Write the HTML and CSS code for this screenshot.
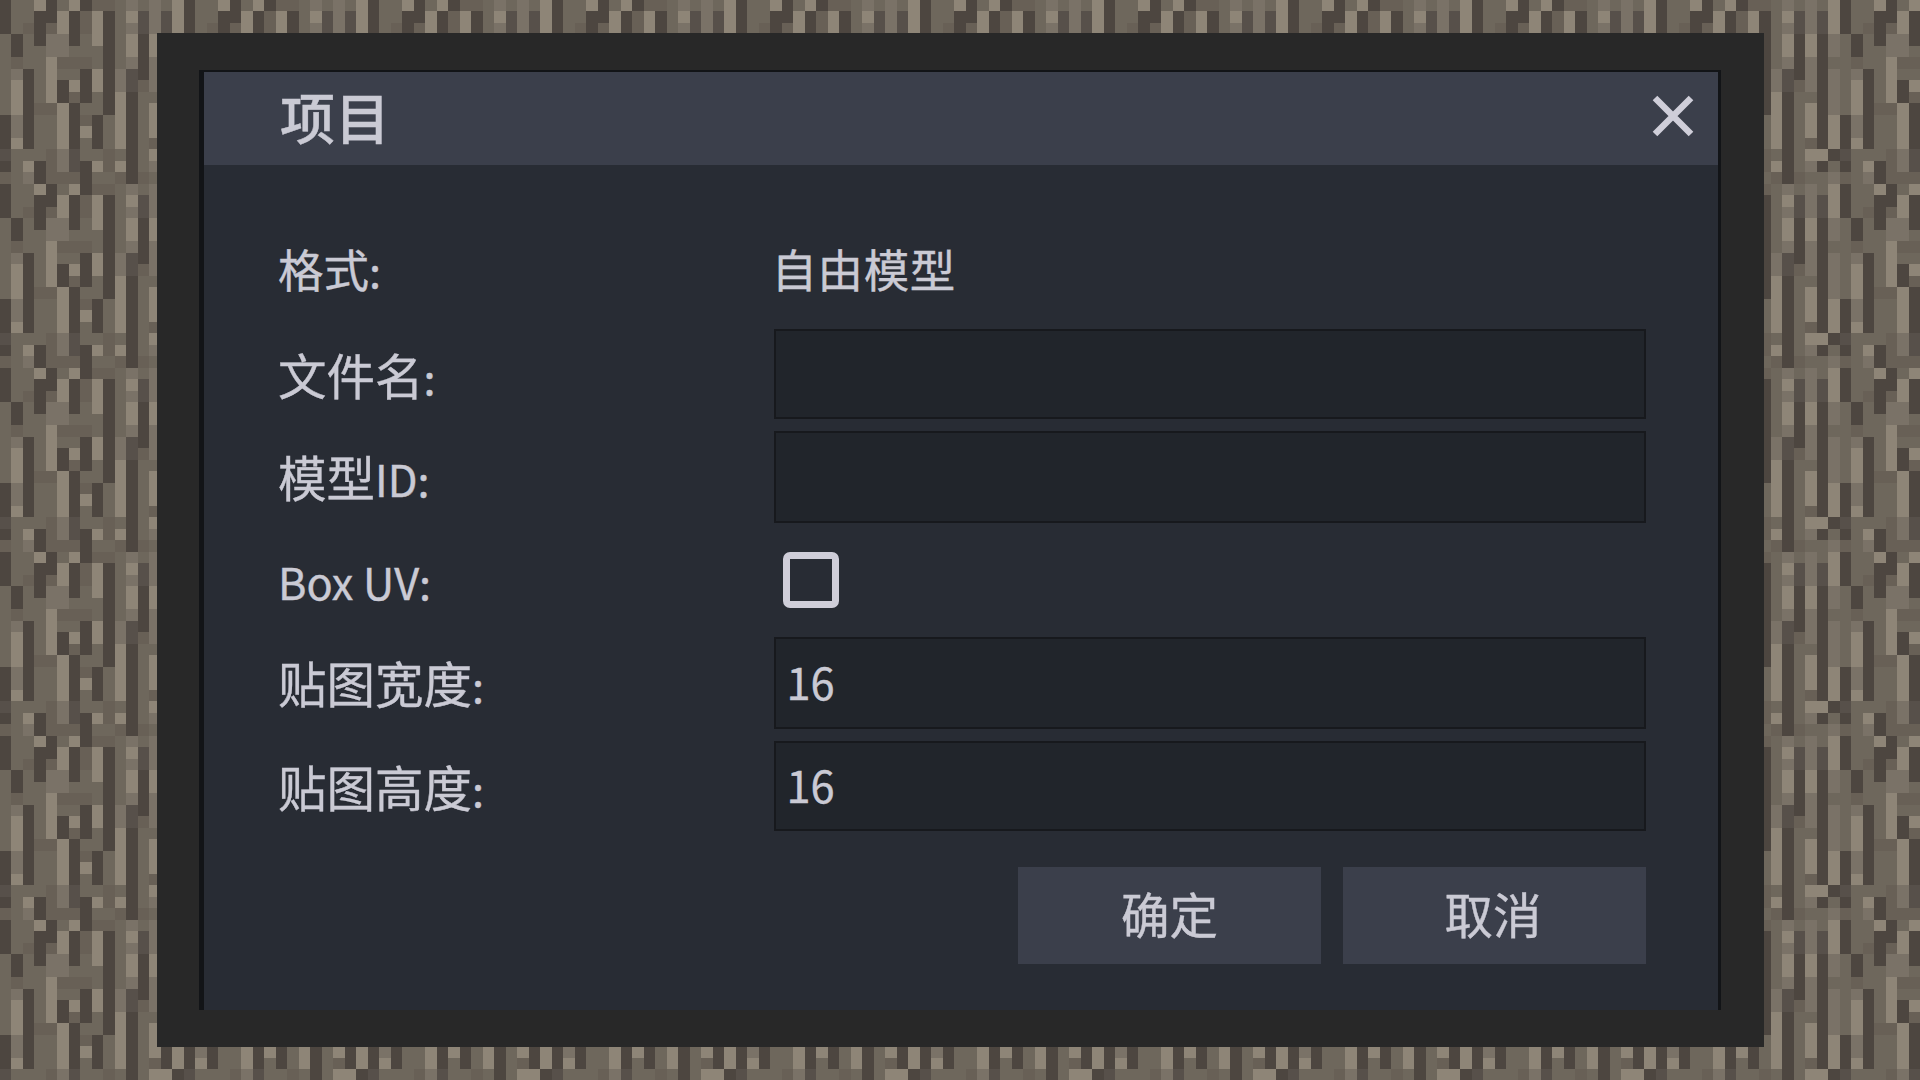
FILE: index.html
```html
<!DOCTYPE html>
<html lang="zh-CN">
<head>
<meta charset="utf-8">
<title>项目</title>
<link rel="stylesheet" href="styles.css">
</head>
<body>
<canvas class="bark" id="bark" width="1920" height="1080"></canvas>
<main class="frame">
  <section class="dialog">
    <header class="titlebar">
      <h1 class="title">项目</h1>
      <svg class="close" viewBox="0 0 42 42"><path d="M3 3L39 39M39 3L3 39"/></svg>
    </header>
    <form class="form">
      <div class="row format">
        <span class="label">格式<span class="latin">:</span></span>
        <span class="value">自由模型</span>
      </div>
      <div class="row compact">
        <span class="label">文件名<span class="latin">:</span></span>
        <div class="field"></div>
      </div>
      <div class="row">
        <span class="label">模型<span class="latin">ID:</span></span>
        <div class="field"></div>
      </div>
      <div class="row">
        <span class="label"><span class="latin">Box UV:</span></span>
        <div class="checkbox"></div>
      </div>
      <div class="row tall">
        <span class="label">贴图宽度<span class="latin">:</span></span>
        <div class="field"><span class="latin">16</span></div>
      </div>
      <div class="row compact">
        <span class="label">贴图高度<span class="latin">:</span></span>
        <div class="field"><span class="latin">16</span></div>
      </div>
    </form>
    <footer class="actions">
      <div class="button">确定</div>
      <div class="button cancel">取消</div>
    </footer>
  </section>
</main>
<script src="bark.js"></script>
</body>
</html>
```
FILE: styles.css
```css
* {
  box-sizing: border-box;
}

body {
  margin: 0;
  width: 1920px;
  height: 1080px;
  overflow: hidden;
  background: #6d665b;
  color: #cacad4;
  font: 48.5px/1 "Noto Sans CJK SC", sans-serif;
  -webkit-text-stroke: 0.4px #cacad4;
}

/* Tiled bark texture behind the window */
.bark {
  position: absolute;
  inset: 0;
  z-index: -1;
}

.frame {
  width: 1607px;
  height: 1014px;
  margin: 33px 0 0 157px;
  padding: 37px 43px 37px 42px;
  background: #282828;
}

.dialog {
  height: 940px;
  border: solid #121417;
  border-width: 2px 3px 0 5px;
  background: #282c34;
}

.titlebar {
  display: flex;
  align-items: flex-start;
  justify-content: space-between;
  height: 93px;
  padding: 0 24px 0 76px;
  background: #3b3f4b;
}

.title {
  margin: 0;
  font-size: 55px;
  font-weight: 500;
  line-height: 86px;
}

.close {
  width: 42px;
  height: 42px;
  margin-top: 23px;
  fill: none;
  stroke: #cfced9;
  stroke-width: 6.5;
}

.form {
  display: flex;
  flex-direction: column;
  gap: 11px;
  padding: 61px 72px 0 74px;
}

.row {
  display: grid;
  grid-template-columns: 495.5px 872.5px;
  align-items: start;
  height: 92px;
}

.row.compact {
  height: 91px;
}

.row.tall {
  height: 93px;
}

.label,
.value {
  line-height: 90px;
  white-space: nowrap;
}

.format {
  font-size: 45.5px;
}

.format .label,
.format .value {
  line-height: 85px;
}

.value {
  margin-left: -2px;
  letter-spacing: 0.6px;
}

.latin {
  font-size: 43.3px;
}

.field {
  height: 92px;
  padding-left: 11px;
  border: 2px solid #17191d;
  background: #21252b;
  line-height: 81px;
}

.compact .field {
  height: 90px;
  line-height: 78px;
}

.checkbox {
  width: 56px;
  height: 56px;
  margin: 18px 0 0 9px;
  border: 7px solid #cfced9;
  border-radius: 7px;
}

.actions {
  display: flex;
  justify-content: flex-end;
  gap: 22px;
  padding: 35px 72px 0 0;
}

.button {
  width: 303px;
  height: 97px;
  background: #3b3f4b;
  line-height: 92px;
  text-align: center;
}

.button.cancel {
  padding-right: 3px;
}
```
FILE: bark.js
```js
// 16x16 bark tile, one character per texel, stretched to 11.5px cells.
const TONES = {
  L: '#8e8577', M: '#7a7267', m: '#6e675c',
  n: '#686056', d: '#57504a', D: '#4d4640'
};
const TILE = [
  'DmmLDmLDnnmMmMmL',
  'DmmDDLDnLDmLdMdL',
  'DmnDnLDnLDmMdMdL',
  'mDmDMMDmLDmLDLDM',
  'mDmmMMmmmDmLDLDM',
  'mnmmLnnnmDmMDMDm',
  'mMDmLmmDLDMdDMDM',
  'mLDmLDLDLDMdnMDM',
  'mLDmLDnDmDLDmmDM',
  'mLDnnLDmmDLDmLDM',
  'DMDmmLDnDmLDmLDL',
  'DMDmmLDLDmLDmLDL',
  'DLDmmLDmDmLDmnDL',
  'dmmmnMdmmnmDmLLD',
  'DmLDnMdDLnLDmMDm',
  'nmMDnnnDmmnDnmmM'
];
const CELL = 11.5;
const ctx = document.getElementById('bark').getContext('2d');
for (let r = 0; r * CELL < 1080; r++) {
  for (let c = 0; c * CELL < 1920; c++) {
    const x = Math.floor(c * CELL);
    const y = Math.floor(r * CELL);
    ctx.fillStyle = TONES[TILE[r % 16][c % 16]];
    ctx.fillRect(x, y, 12, 12);
  }
}
```
